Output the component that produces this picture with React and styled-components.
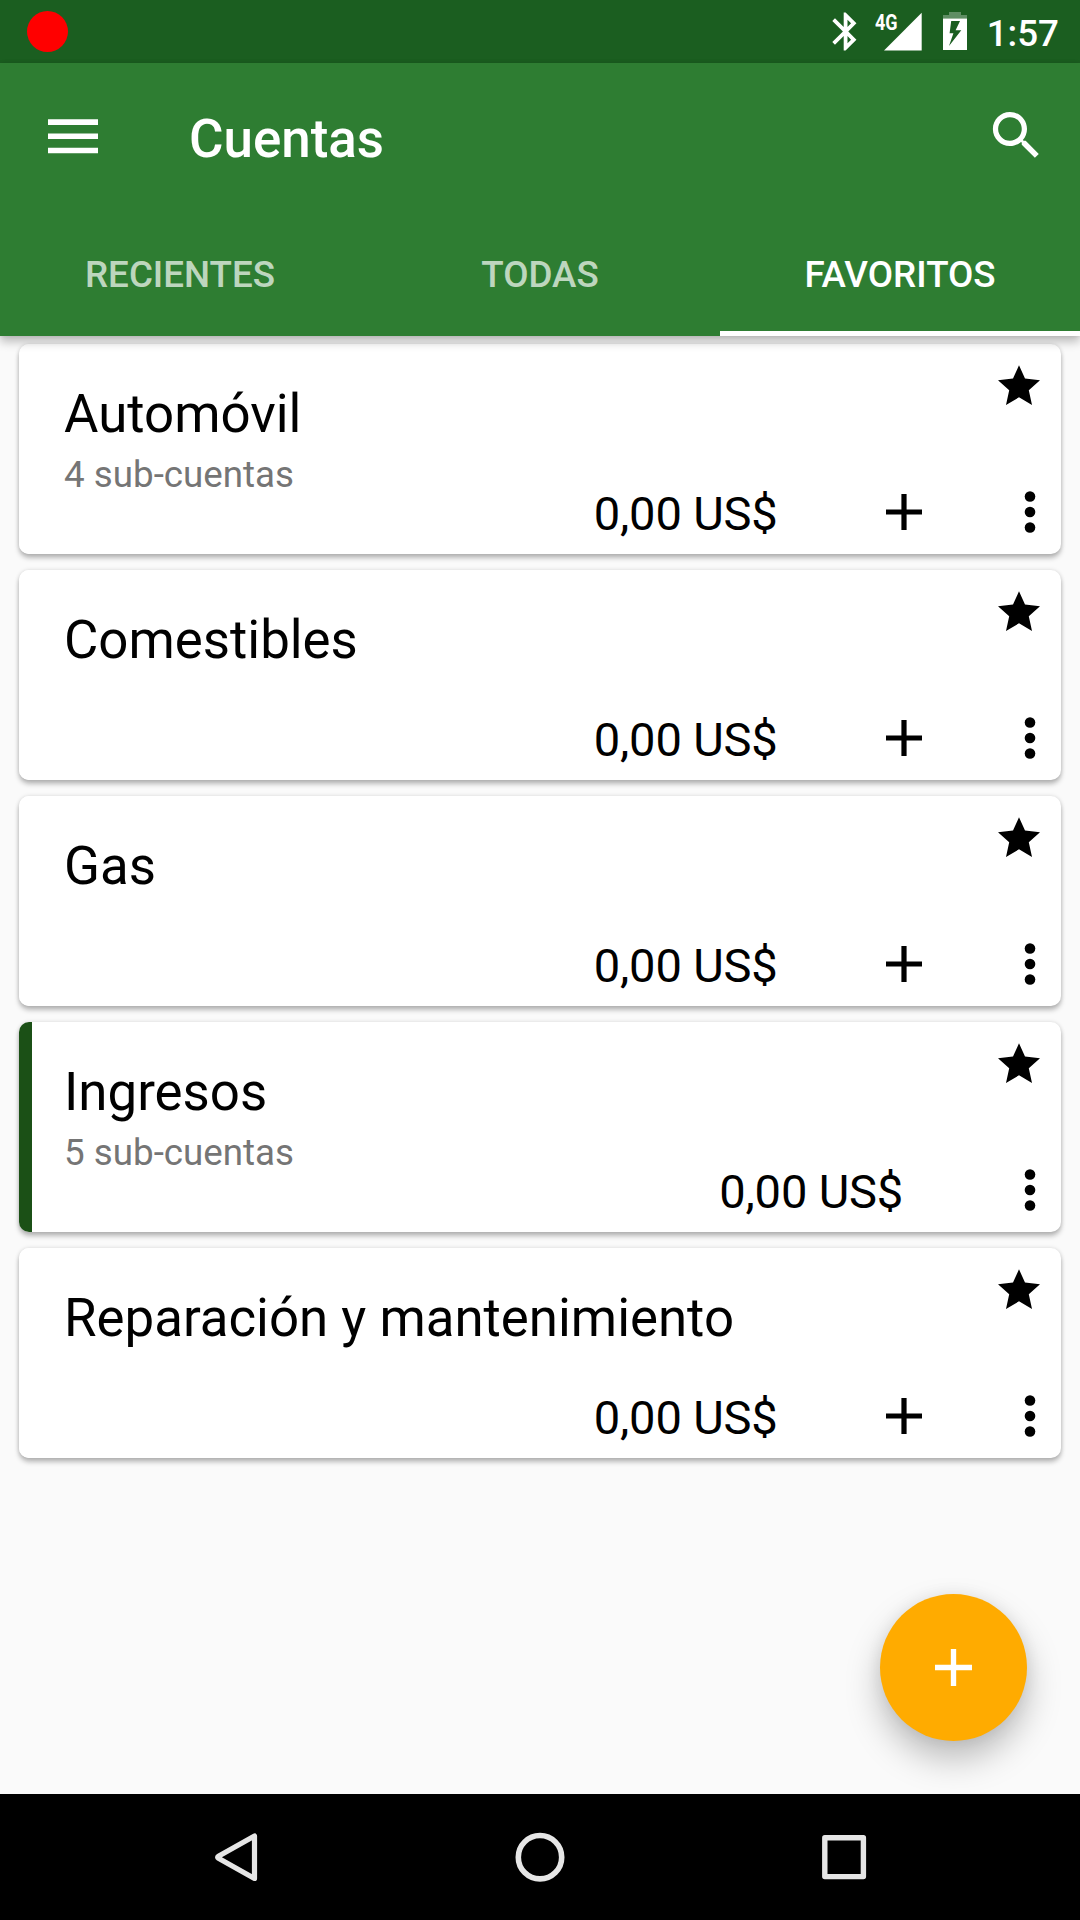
import React from "react";
import styled, { createGlobalStyle } from "styled-components";

const GlobalStyle = createGlobalStyle`
  * { box-sizing: border-box; }
  body { margin: 0; background: #fafafa; }
`;

const Screen = styled.div`
  width: 1080px;
  height: 1920px;
  display: flex;
  flex-direction: column;
  overflow: hidden;
  background: #fafafa;
  color: #000;
  font-family: Roboto, "Liberation Sans", sans-serif;
`;

const StatusBar = styled.div`
  height: 63px;
  flex: none;
  display: flex;
  justify-content: space-between;
  align-items: center;
  padding: 0 21px 0 27px;
  background: #1b5e20;
  color: #fff;
`;

const RecordDot = styled.div`
  width: 41px;
  height: 41px;
  border-radius: 50%;
  background: #f00;
`;

const StatusIcons = styled.div`
  height: 63px;
  display: flex;
  align-items: flex-start;
`;

const StatusSvg = styled.svg`
  display: block;
  flex: none;
  margin-left: ${(p) => p.$gap || 0}px;
`;

const NetworkLabel = styled.span`
  width: 10px;
  margin: 10px 0 0 18px;
  font-size: 22.5px;
  line-height: 24px;
  font-weight: 700;
  white-space: nowrap;
  transform: scaleX(0.8);
  transform-origin: left;
`;

const Clock = styled.span`
  margin-left: 20px;
  padding-top: 2px;
  font-size: 36.75px;
  line-height: 63px;
  font-weight: 500;
`;

const Header = styled.header`
  position: relative;
  z-index: 1;
  height: 273px;
  flex: none;
  display: flex;
  flex-direction: column;
  background: #2e7d32;
  color: #fff;
  box-shadow: 0 6px 9px rgba(0, 0, 0, 0.24), 0 0 4px rgba(0, 0, 0, 0.1);
`;

const Toolbar = styled.div`
  height: 147px;
  display: flex;
  align-items: center;
  padding: 0 32px 0 48px;
`;

const Title = styled.h1`
  flex: 1;
  margin: 0 0 0 91px;
  padding-top: 5px;
  font-size: 52.9px;
  line-height: 62px;
  font-weight: 500;
`;

const ToolbarIcon = styled.svg`
  display: block;
  flex: none;
  margin-bottom: ${(p) => p.$lift || 0}px;
`;

const Tabs = styled.nav`
  height: 126px;
  display: grid;
  grid-template-columns: repeat(3, 1fr);
`;

const Tab = styled.div`
  text-align: center;
  padding-top: 43px;
  font-size: 36.75px;
  line-height: 43px;
  font-weight: 500;
  color: ${(p) => (p.$active ? "#fff" : "rgba(255,255,255,.7)")};
  border-bottom: 5px solid ${(p) => (p.$active ? "#fff" : "transparent")};
`;

const Content = styled.main`
  flex: 1;
  display: flex;
  flex-direction: column;
  justify-content: space-between;
  min-height: 0;
  overflow: hidden;
`;

const AccountList = styled.div`
  display: flex;
  flex-direction: column;
  gap: 16px;
  padding: 8px 19px 0;
`;

const Card = styled.article`
  height: 210px;
  display: flex;
  border-radius: 10px;
  overflow: hidden;
  background: #fff;
  box-shadow: 0 4px 5px rgba(0, 0, 0, 0.26), 0 0 4px rgba(0, 0, 0, 0.13);
`;

const Accent = styled.div`
  width: 13px;
  background: ${(p) => p.$color};
`;

const CardBody = styled.div`
  flex: 1;
  display: flex;
  flex-direction: column;
  padding: 0 19px 0 32px;
`;

const CardTop = styled.div`
  height: 147px;
  display: flex;
  justify-content: space-between;
  align-items: flex-start;
`;

const Name = styled.h2`
  margin: 39px 0 13px;
  font-size: 52.8px;
  line-height: 62px;
  font-weight: 400;
`;

const SubAccounts = styled.div`
  font-size: 36.75px;
  line-height: 34px;
  color: #757575;
`;

const StarIcon = styled.svg`
  display: block;
  margin: 21px 2px 0 0;
`;

const CardBottom = styled.div`
  height: 42px;
  display: flex;
  justify-content: flex-end;
  align-items: center;
`;

const Amount = styled.span`
  margin-right: ${(p) => p.$gap}px;
  padding-top: 4px;
  font-size: 47.1px;
  line-height: 42px;
  letter-spacing: -0.2px;
`;

const ActionIcon = styled.svg`
  display: block;
  margin-right: ${(p) => p.$gap || 0}px;
`;

const FabRow = styled.div`
  display: flex;
  justify-content: flex-end;
  padding: 0 53px 53px 0;
`;

const Fab = styled.button`
  width: 147px;
  height: 147px;
  padding: 0;
  border: 0;
  border-radius: 50%;
  display: flex;
  align-items: center;
  justify-content: center;
  background: #ffab00;
  box-shadow: 0 18px 34px rgba(0, 0, 0, 0.25), 0 0 16px rgba(0, 0, 0, 0.07);
`;

const NavBar = styled.div`
  height: 126px;
  flex: none;
  display: flex;
  justify-content: space-between;
  align-items: center;
  padding: 0 204px;
  background: #000;
`;

const accounts = [
  { name: "Automóvil", sub: "4 sub-cuentas", add: true },
  { name: "Comestibles", add: true },
  { name: "Gas", add: true },
  { name: "Ingresos", sub: "5 sub-cuentas", color: "#1b5016" },
  { name: "Reparación y mantenimiento", add: true },
];

function Plus({ color, gap, size = 36 }) {
  return (
    <ActionIcon width={size} height={size} viewBox="0 0 36 36" $gap={gap}>
      <path d="M18 0v36M0 18h36" stroke={color} strokeWidth="5.2" />
    </ActionIcon>
  );
}

function AccountCard({ account }) {
  return (
    <Card>
      <Accent $color={account.color || "#fff"} />
      <CardBody>
        <CardTop>
          <div>
            <Name>{account.name}</Name>
            {account.sub && <SubAccounts>{account.sub}</SubAccounts>}
          </div>
          <StarIcon width="42" height="41" viewBox="0 0 42 41">
            <path d="M21 .3L27 13.5 42 15.3 30.8 25.2 34 40 21 32.3 8 40 11.2 25.2 0 15.3 15 13.5z" />
          </StarIcon>
        </CardTop>
        <CardBottom>
          <Amount $gap={account.add ? 108.5 : 115}>0,00 US$</Amount>
          {account.add && <Plus color="#000" gap={96} />}
          <ActionIcon width="24" height="42" viewBox="0 0 24 42">
            <circle cx="12" cy="5.5" r="5.3" />
            <circle cx="12" cy="21" r="5.3" />
            <circle cx="12" cy="36.5" r="5.3" />
          </ActionIcon>
        </CardBottom>
      </CardBody>
    </Card>
  );
}

export default function App() {
  return (
    <Screen>
      <GlobalStyle />
      <StatusBar>
        <RecordDot />
        <StatusIcons>
          <StatusSvg width="25" height="63" viewBox="832 0 25 63" fill="#fff">
            <path
              transform="translate(822.8 8.7) scale(1.9)"
              d="M17.71 7.71L12 2h-1v7.59L6.41 5 5 6.41 10.59 12 5 17.59 6.41 19 11 14.41V22h1l5.71-5.71-4.3-4.29 4.3-4.29zM13 5.83l1.88 1.88L13 9.59V5.83zm1.88 10.46L13 18.17v-3.76l1.88 1.88z"
            />
          </StatusSvg>
          <NetworkLabel>4G</NetworkLabel>
          <StatusSvg width="38" height="63" viewBox="884 0 38 63" fill="#fff" $gap={-1}>
            <path d="M921.7 12.7V50.5H884z" />
          </StatusSvg>
          <StatusSvg width="24" height="63" viewBox="943 0 24 63" fill="#fff" $gap={21}>
            <path opacity=".3" d="M949 12h12v3h6v3.5h-24V15h6z" />
            <path
              fillRule="evenodd"
              d="M943 18.5h24V50h-24zM951.2 21L949.6 33.2H953.4L949 46 961.3 30.3H955.6L960 21z"
            />
          </StatusSvg>
          <Clock>1:57</Clock>
        </StatusIcons>
      </StatusBar>
      <Header>
        <Toolbar>
          <ToolbarIcon width="50" height="35" viewBox="0 0 50 35" $lift={1}>
            <path d="M0 3.1h50M0 17.3h50M0 31.5h50" stroke="#fff" strokeWidth="5.6" />
          </ToolbarIcon>
          <Title>Cuentas</Title>
          <ToolbarIcon width="63" height="63" viewBox="0 0 24 24" fill="#fff" $lift={2}>
            <path d="M15.5 14h-.79l-.28-.27C15.41 12.59 16 11.11 16 9.5 16 5.91 13.09 3 9.5 3S3 5.91 3 9.5 5.91 16 9.5 16c1.61 0 3.09-.59 4.23-1.57l.27.28v.79l5 4.99L20.49 19l-4.99-5zm-6 0C7.01 14 5 11.99 5 9.5S7.01 5 9.5 5 14 7.01 14 9.5 11.99 14 9.5 14z" />
          </ToolbarIcon>
        </Toolbar>
        <Tabs>
          <Tab>RECIENTES</Tab>
          <Tab>TODAS</Tab>
          <Tab $active>FAVORITOS</Tab>
        </Tabs>
      </Header>
      <Content>
        <AccountList>
          {accounts.map((account) => (
            <AccountCard key={account.name} account={account} />
          ))}
        </AccountList>
        <FabRow>
          <Fab aria-label="+">
            <Plus color="#fff" size={37} />
          </Fab>
        </FabRow>
      </Content>
      <NavBar>
        <svg width="64" height="64" viewBox="0 0 64 64" fill="none" stroke="#e6e6e6" strokeWidth="5.2" strokeLinejoin="round">
          <path d="M50.5 11v42.5L14.4 33.2q-1.6-1 0-2z" />
        </svg>
        <svg width="64" height="64" viewBox="0 0 64 64" fill="none" stroke="#e6e6e6" strokeWidth="5.6">
          <circle cx="32" cy="32.2" r="21.7" />
        </svg>
        <svg width="64" height="64" viewBox="0 0 64 64" fill="none" stroke="#e6e6e6" strokeWidth="5.4" strokeLinejoin="round">
          <path d="M12.8 12.8h38.6v38.8H12.8z" />
        </svg>
      </NavBar>
    </Screen>
  );
}
